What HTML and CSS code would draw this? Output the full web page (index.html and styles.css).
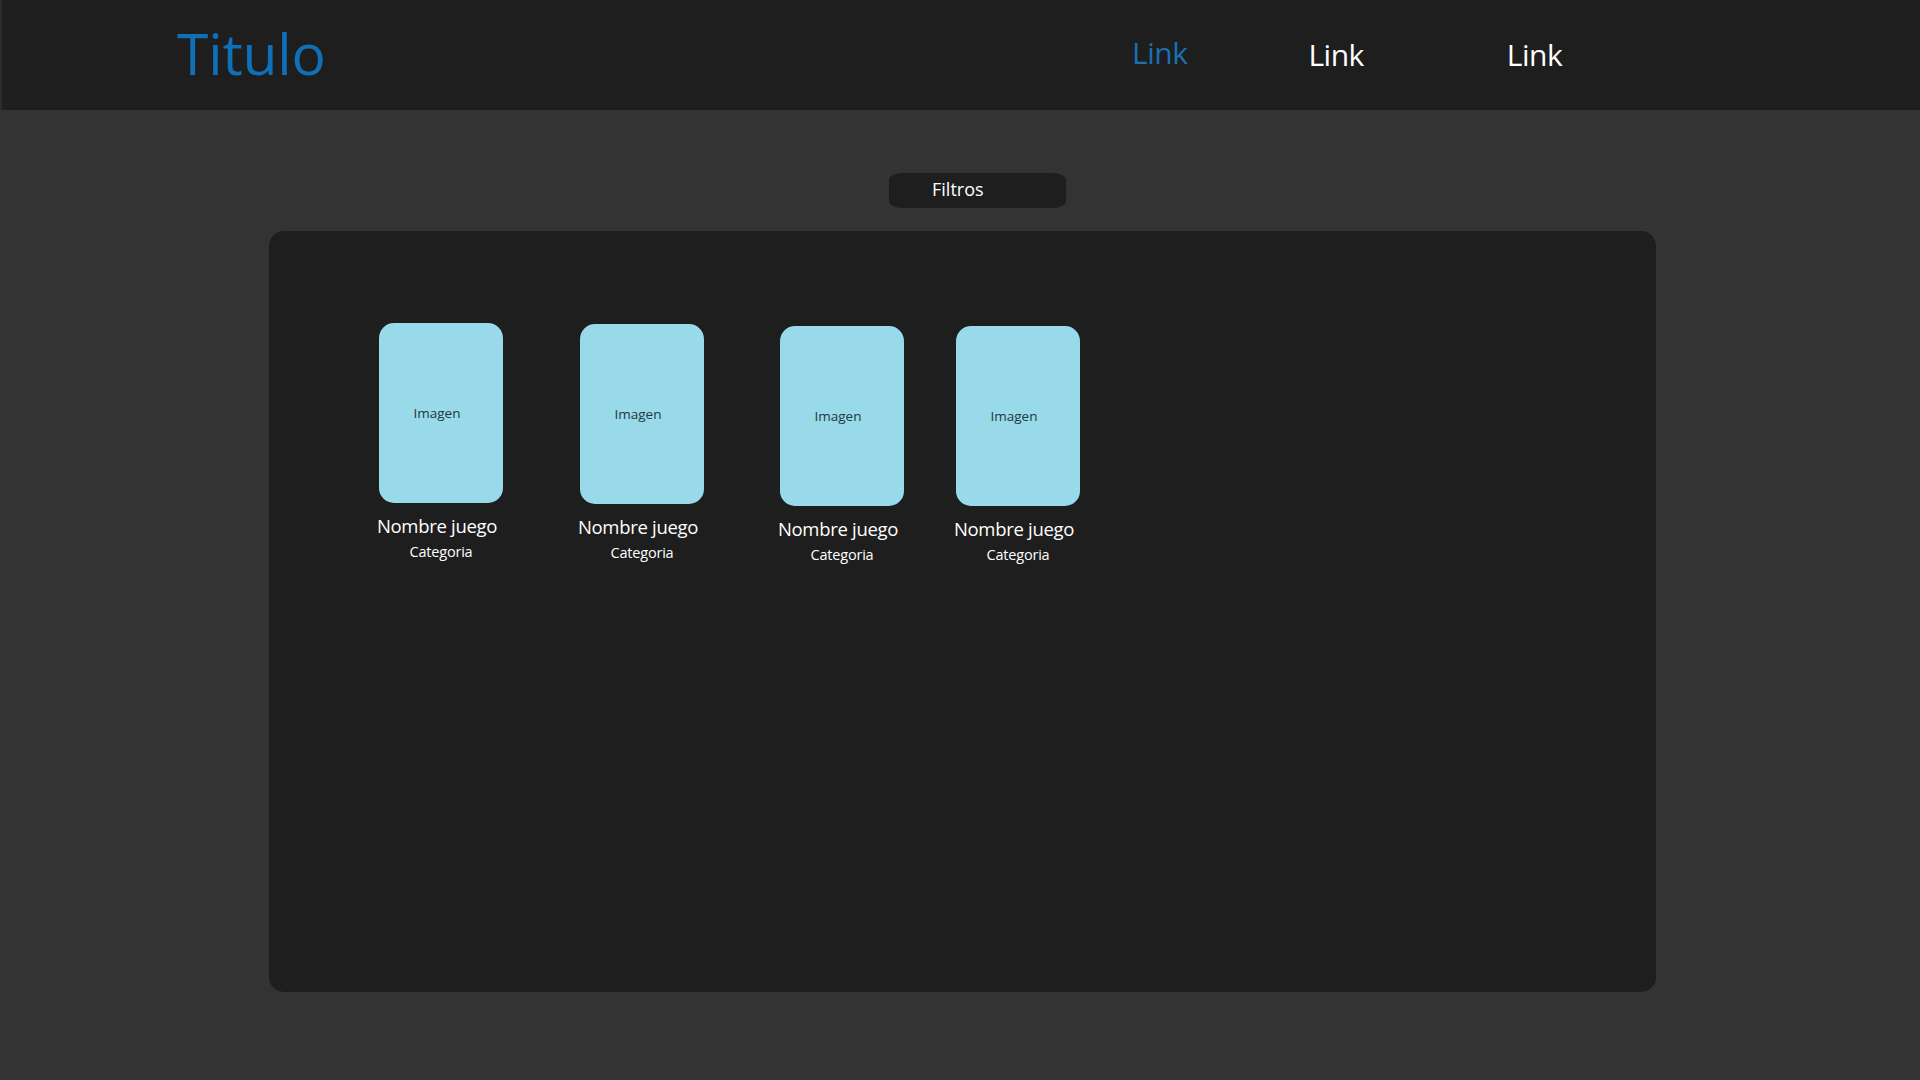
FILE: index.html
```html
<!DOCTYPE html>
<html lang="es">
<head>
<meta charset="utf-8">
<title>Titulo</title>
<link rel="stylesheet" href="styles.css">
</head>
<body>
<header class="topbar">
  <h1 class="brand">Titulo</h1>
  <nav class="nav">
    <a class="nav-link nav-link--active" href="#">Link</a>
    <a class="nav-link nav-link--second" href="#">Link</a>
    <a class="nav-link nav-link--third" href="#">Link</a>
  </nav>
</header>
<main class="content">
  <div class="filters-row">
    <button class="filters-btn">Filtros</button>
  </div>
  <section class="panel">
    <div class="grid">
      <article class="game game--a">
        <div class="game-img">Imagen</div>
        <div class="game-name">Nombre juego</div>
        <div class="game-cat">Categoria</div>
      </article>
      <article class="game game--b">
        <div class="game-img">Imagen</div>
        <div class="game-name">Nombre juego</div>
        <div class="game-cat">Categoria</div>
      </article>
      <article class="game game--c">
        <div class="game-img">Imagen</div>
        <div class="game-name">Nombre juego</div>
        <div class="game-cat">Categoria</div>
      </article>
      <article class="game game--d">
        <div class="game-img">Imagen</div>
        <div class="game-name">Nombre juego</div>
        <div class="game-cat">Categoria</div>
      </article>
    </div>
  </section>
</main>
</body>
</html>
```
FILE: styles.css
```css
* { box-sizing: border-box; }
html, body {
  margin: 0;
  padding: 0;
  background: #333333;
  font-family: "Open Sans", "Noto Sans", "DejaVu Sans", sans-serif;
  width: 1920px;
  height: 1080px;
  overflow: hidden;
}
.topbar {
  height: 110px;
  background: #1e1e1e;
  border-left: 2px solid #2c2c2c;
  display: flex;
  align-items: center;
  padding-left: 175px;
}
.brand {
  margin: 0;
  font-weight: 400;
  font-size: 57px;
  color: #0f70b7;
  letter-spacing: -0.2px;
  line-height: 1;
  width: 955px;
  position: relative;
  top: -2px;
}
.nav {
  display: flex;
  align-items: center;
}
.nav-link {
  font-size: 30px;
  color: #ffffff;
  text-decoration: none;
  line-height: 1;
  letter-spacing: -0.5px;
}
.nav-link--active { color: #1a70b0; position: relative; top: -2px; }
.nav-link--second { margin-left: 121px; }
.nav-link--third { margin-left: 143px; }

.content {
  display: flex;
  flex-direction: column;
  align-items: flex-start;
  padding-left: 269px;
}
.filters-row {
  padding-top: 63px;
  padding-left: 620px;
}
.filters-btn {
  width: 177px;
  height: 35px;
  background: #1e1e1e;
  border: none;
  border-radius: 14px / 7px;
  color: #ffffff;
  font-family: inherit;
  font-size: 18px;
  padding: 0 0 4px 43px;
  text-align: left;
}
.panel {
  margin-top: 23px;
  width: 1387px;
  height: 761px;
  background: #1e1e1e;
  border-radius: 15px;
  padding: 92px 0 0 110px;
}
.grid {
  display: flex;
  align-items: flex-start;
}
.game {
  width: 124px;
  display: flex;
  flex-direction: column;
  align-items: center;
}
.game--b { margin-left: 77px; margin-top: 1px; }
.game--c { margin-left: 76px; margin-top: 3px; }
.game--d { margin-left: 52px; margin-top: 3px; }
.game-img {
  width: 124px;
  height: 180px;
  background: #98d9ea;
  border-radius: 15px;
  display: flex;
  align-items: center;
  justify-content: center;
  color: #22383d;
  font-size: 13.5px;
  padding-right: 8px;
}
.game-name {
  margin-top: 10px;
  color: #ffffff;
  font-size: 18.5px;
  white-space: nowrap;
  letter-spacing: -0.3px;
  margin-right: 8px;
}
.game-cat {
  margin-top: 4px;
  color: #ffffff;
  font-size: 14.5px;
  letter-spacing: -0.2px;
}
```
